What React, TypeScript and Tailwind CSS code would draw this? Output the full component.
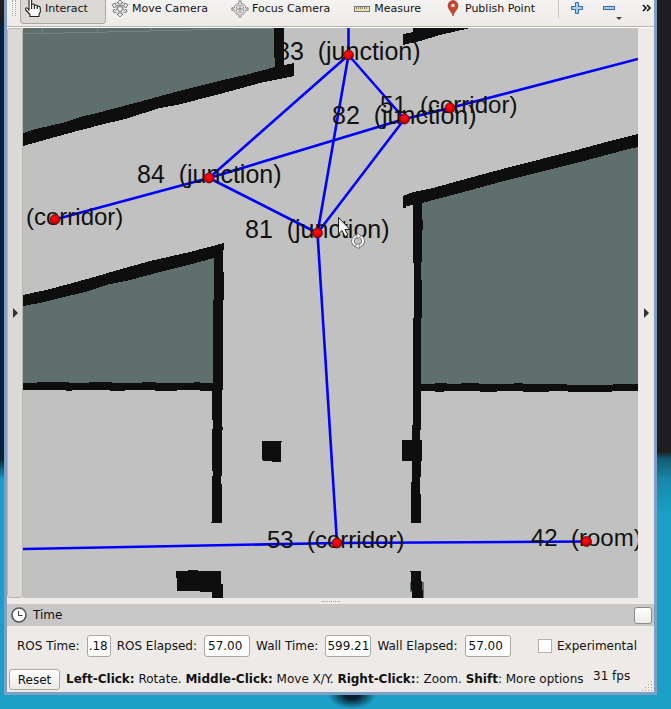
import type { ReactNode } from "react";

type Point = [number, number];

const nodes: Point[] = [
  [348.5, 55],
  [404.5, 119],
  [450, 108],
  [209, 178],
  [55, 219.5],
  [317.5, 233],
  [337, 543],
  [586.5, 541.5],
];

const edges: [Point, Point][] = [
  [[348.5, 28], nodes[0]],
  [nodes[0], nodes[3]],
  [nodes[0], nodes[5]],
  [nodes[0], nodes[1]],
  [nodes[1], nodes[3]],
  [nodes[1], nodes[5]],
  [nodes[1], nodes[2]],
  [nodes[2], [638, 59]],
  [nodes[3], nodes[4]],
  [nodes[3], nodes[5]],
  [nodes[5], nodes[6]],
  [[23, 549], nodes[6]],
  [nodes[6], nodes[7]],
];

const junctions: { x: number; y: number; text: string }[] = [
  { x: 276, y: 60, text: "83  (junction)" },
  { x: 332, y: 124, text: "82  (junction)" },
  { x: 137, y: 183, text: "84  (junction)" },
  { x: 245, y: 238, text: "81  (junction)" },
];

const places: { x: number; y: number; text: string }[] = [
  { x: 380, y: 113, text: "51  (corridor)" },
  { x: 26, y: 225, text: "(corridor)" },
  { x: 267, y: 548, text: "53  (corridor)" },
  { x: 531, y: 546, text: "42  (room)" },
];

function MapView() {
  return (
    <svg
      viewBox="23 28 615 570"
      preserveAspectRatio="xMidYMid slice"
      className="min-w-0 flex-1 bg-[#c1c1c1]"
      role="img"
      aria-label="Topological map"
    >
      <defs>
        <radialGradient id="node" cx="45%" cy="40%" r="60%">
          <stop offset="0" stopColor="#ff1010" />
          <stop offset="0.6" stopColor="#e60000" />
          <stop offset="1" stopColor="#8a0000" />
        </radialGradient>
      </defs>
      <g shapeRendering="crispEdges">
        <g fill="#5f6f6e">
          <path d="M23 28H276V70L23 138Z" />
          <path d="M421 200L638 142V386H420Z" />
          <path d="M23 300L216 252V385H23Z" />
          <path d="M410 582H414V592H410ZM418 582H424V598H418Z" />
        </g>
        <g stroke="#748483" strokeWidth="1" fill="none">
          <path d="M23 34L276 28M42 28V33M97 28V32M151 28V31M206 28V30" />
        </g>
        <g fill="#0e0e0e">
          <path d="M23 133L36 129L62 123L80 117L97 113L150 99L175 92L223 80L245 75L275 67V58H274V28H284V65L294 63V76L260 83L220 94L177 105L160 108L125 119L100 125L66 134L23 146Z" />
          <path d="M403 34L413 32V28H470L440 35L420 41L403 45Z" />
          <path d="M403 196L413 192L433 188L480 175L510 167L577 150L610 141L638 134V147L625 150L580 162L540 172L500 182L460 193L422 203V220H423V230H422V262H421V280H422V318H421V384H435V383H447V384H461V383H479V384H514V383H523V384H567V385H613V384H638V391H612V392H568V391H549V392H523V391H497V392H480V391H444V392H435V391H421V430H420V440H422V461H421V477H420V494H421V523H411V482H412V461H402V440H412V425H413V318H414V263H413V205L406 206V208H403Z" />
          <path d="M23 295L46 290L69 284L94 277L118 270L150 261L190 252L209 247L224 243V250H223V272H224V300H223V374H223V390H222V427H223V430H222V476H221V484H222V523H211V522H212V476H213V471H212V429H213V420H212V391H200V390H177V391H155V390H125V391H110V390H72V391H66V390H23V383H37V382H69V383H89V382H112V383H142V382H156V383H194V382H200V383H213V300H214V258L188 265L160 272L130 280L110 284L85 292L60 298L40 303L23 306Z" />
          <path d="M262 441H282V442H281V462H272V461H263V460H262Z" />
          <path d="M176 571H188V570H198V571H221V584H223V598H212V592H200V591H177V578H176Z" />
          <path d="M410 571H421V581H422V590H423V598H412V590H411V572H410Z" />
        </g>
      </g>
      <g stroke="#0000ff" strokeWidth="2.6">
        {edges.map(([a, b], i) => (
          <line key={i} x1={a[0]} y1={a[1]} x2={b[0]} y2={b[1]} />
        ))}
      </g>
      <g className="font-['Liberation_Sans',Arial,sans-serif]" fill="#111111">
        {junctions.map((l) => (
          <text key={l.text} x={l.x} y={l.y} className="text-[25px] whitespace-pre">
            {l.text}
          </text>
        ))}
        {places.map((l) => (
          <text key={l.text} x={l.x} y={l.y} className="text-[24px] whitespace-pre">
            {l.text}
          </text>
        ))}
      </g>
      {nodes.map(([x, y]) => (
        <circle key={`${x}-${y}`} cx={x} cy={y} r="5" fill="url(#node)" stroke="#5a0a0a" strokeWidth="0.7" />
      ))}
      <g strokeLinejoin="round">
        <path d="M338.5 217.500V234L342 230.500L345 236.500L348 235L345 229.500H350Z" fill="#f4f4f4" stroke="#222" strokeWidth="1" />
        <circle cx="358" cy="241" r="5" fill="none" stroke="#666" strokeWidth="3.6" />
        <circle cx="358" cy="241" r="5" fill="none" stroke="#fff" strokeWidth="2" />
        <path d="M357 233L361 236L357 239ZM359 243L355 246L359 249Z" fill="#fff" stroke="#666" strokeWidth="0.7" />
      </g>
    </svg>
  );
}

const iconBox = "size-4 shrink-0 overflow-visible";

function HandIcon() {
  return (
    <svg viewBox="0 0 16 16" className={iconBox} fill="#fff" stroke="#222" strokeWidth="1.1" strokeLinejoin="round">
      <path d="M4 10V-1Q4 -2.500 5.300 -2.500T6.600 -1V4Q6.800 3 8 3T9.400 4V5Q9.700 4 10.900 4T12.200 5V6Q12.700 5 13.900 5.200T15.300 7V11L14 13.500V15.500H5V13.500L0.800 9Q0 7 1.500 6.700Q2.700 6.700 4 9" />
      <path d="M6.600 4V8M9.400 5V8M12.200 6V8" fill="none" />
    </svg>
  );
}

function MoveIcon() {
  return (
    <svg viewBox="0 0 16 16" className={iconBox} fill="#f4f4f4" stroke="#707070" strokeWidth="0.9">
      <path d="M7 2V5H9V2H11L8 -1L5 2ZM7 13V10H9V13H11L8 16L5 13Z" />
      <path d="M0 3.500L4 2L3.500 4Q8 6.500 12.500 4L12 2L16 3.500L14 7L13 5.500Q8 8.500 3 5.500L2 7Z" />
      <path d="M1 11L2 8L3.500 9.500Q5 8 6 6M15 11L14 8L12.500 9.500Q11 8 10 6M1 11L4.500 11.500" fill="none" />
      <circle cx="8" cy="8" r="2.500" />
      <path d="M11.500 11.500L15 11" fill="none" />
    </svg>
  );
}

function FocusIcon() {
  return (
    <svg viewBox="0 0 16 16" className={iconBox} fill="none" stroke="#777">
      <circle cx="8" cy="8" r="5" strokeWidth="2.6" />
      <path d="M8 -0.500V5.500M8 10.500V16.500M-0.500 8H5.500M10.500 8H16.500" strokeWidth="2.8" />
      <circle cx="8" cy="8" r="5" stroke="#f2f2f2" strokeWidth="1.200" />
      <path d="M8 0.300V5M8 11V15.700M0.300 8H5M11 8H15.700" stroke="#f2f2f2" strokeWidth="1.200" />
      <path d="M8 6V10M6 8H10" strokeWidth="1" />
    </svg>
  );
}

function RulerIcon() {
  return (
    <svg viewBox="0 0 16 16" className={iconBox}>
      <rect x="0.500" y="5.500" width="15" height="5" fill="#eee2a8" stroke="#777" />
      <path d="M2.500 6V8M4.500 6V8M6.500 6V8M8.500 6V8M10.500 6V8M12.500 6V8" stroke="#8a8468" />
    </svg>
  );
}

function PinIcon() {
  return (
    <svg viewBox="0 0 16 16" className={iconBox}>
      <path d="M8 15C7 11 3 8 3 5A5 5.500 0 0 1 13 5C13 8 9 11 8 15Z" fill="#c8472c" stroke="#943420" strokeWidth="0.600" />
      <circle cx="8" cy="4.500" r="1.800" fill="#f8ece8" />
    </svg>
  );
}

function ToolButton({ icon, label, active }: { icon: ReactNode; label: string; active?: boolean }) {
  return (
    <button
      type="button"
      aria-pressed={!!active}
      className={`flex h-6 shrink-0 items-center gap-1 rounded-b-sm border border-t-0 pr-[17px] pb-1.5 pl-1 ${
        active ? "border-[#aaa7a2] bg-[#dbd9d5]" : "border-transparent"
      }`}
    >
      {icon}
      {label}
    </button>
  );
}

function Toolbar() {
  return (
    <header className="flex h-7 items-start overflow-hidden border-b border-white bg-linear-to-b from-[#f5f3f2] to-[#edeae7] pl-1 text-[11px] leading-4 shadow-[inset_0_-1px_0_#b9b4ae]">
      <div className="flex h-4 w-2 gap-0.5 pl-px">
        <span className="w-0 border-l border-dotted border-[#aaa]" />
        <span className="w-0 border-l border-dotted border-[#aaa]" />
      </div>
      <div className="flex gap-px pl-px">
        <ToolButton icon={<HandIcon />} label="Interact" active />
        <ToolButton icon={<MoveIcon />} label="Move Camera" />
        <ToolButton icon={<FocusIcon />} label="Focus Camera" />
        <ToolButton icon={<RulerIcon />} label="Measure" />
        <ToolButton icon={<PinIcon />} label="Publish Point" />
      </div>
      <div className="ml-auto flex items-start pr-px">
        <span className="mr-2.5 h-[18px] w-px bg-[#cbc8c4]" />
        <button type="button" aria-label="Add tool" className="mr-4 h-4 w-4">
          <svg viewBox="0 0 16 16" className="size-4">
            <path d="M6.500 2.500H9.500V6.500H13.500V9.500H9.500V13.500H6.500V9.500H2.500V6.500H6.500Z" fill="#a9cbe8" stroke="#3168a8" />
          </svg>
        </button>
        <button type="button" aria-label="Remove tool" className="mr-4 h-5 w-6">
          <svg viewBox="0 0 24 20" className="h-5 w-6">
            <rect x="2.500" y="6.500" width="11" height="3" fill="#a9cbe8" stroke="#3168a8" />
            <path d="M15 17H21L18 20Z" fill="#444" />
          </svg>
        </button>
        <button type="button" aria-label="More tools" className="h-4 w-3">
          <svg viewBox="0 0 12 16" className="h-4 w-3" fill="none" stroke="#111" strokeWidth="1.600">
            <path d="M2 5L5 8L2 11M6 5L9 8L6 11" />
          </svg>
        </button>
      </div>
    </header>
  );
}

function Field({ id, label, value, narrow }: { id: string; label: string; value: string; narrow?: boolean }) {
  return (
    <div className="flex items-center gap-[7px]">
      <label htmlFor={id}>{label}</label>
      <input
        id={id}
        readOnly
        value={value}
        className={`h-[22px] rounded-[3px] border border-[#aaa7a3] bg-white ${
          narrow ? "w-6 pl-px" : value.length > 5 ? "w-[46px] pl-px" : "w-[46px] pl-[3px]"
        }`}
      />
    </div>
  );
}

function TimePanel() {
  return (
    <section>
      <div className="flex h-[22px] items-center gap-1.5 bg-[#c7c7c7] pr-0.5 pl-1">
        <svg viewBox="0 0 16 16" className="size-4">
          <circle cx="8" cy="8" r="7" fill="#fff" stroke="#555" strokeWidth="1.600" />
          <path d="M7.500 4V8.500H11.500" fill="none" stroke="#333" />
        </svg>
        <h2>Time</h2>
        <button
          type="button"
          aria-label="Close time panel"
          className="ml-auto h-[17px] w-[18px] rounded-[3px] border border-[#8e8b87] bg-linear-to-b from-white to-[#eeebe8]"
        />
      </div>
      <div className="flex h-10 items-center gap-1.5 pr-[17px] pl-2.5 whitespace-nowrap">
        <Field id="ros-time" label="ROS Time:" value=".18" narrow />
        <Field id="ros-elapsed" label="ROS Elapsed:" value="57.00" />
        <Field id="wall-time" label="Wall Time:" value="599.21" />
        <Field id="wall-elapsed" label="Wall Elapsed:" value="57.00" />
        <label className="ml-auto flex items-center gap-[5px]">
          <input type="checkbox" className="size-3.5 appearance-none border border-[#b5b2ae] bg-white" />
          Experimental
        </label>
      </div>
    </section>
  );
}

function StatusBar() {
  return (
    <footer className="flex h-[26px] items-start gap-1.5 pl-0.5">
      <button
        type="button"
        className="mt-[3px] h-[21px] w-[51px] shrink-0 rounded-[3px] border border-[#aaa7a3] bg-linear-to-b from-white to-[#edeae7]"
      >
        Reset
      </button>
      <p className="mt-1 min-w-0 flex-1 overflow-hidden leading-[18px] whitespace-nowrap">
        <b>Left-Click:</b> Rotate. <b>Middle-Click:</b> Move X/Y. <b>Right-Click:</b>: Zoom. <b>Shift</b>: More options
      </p>
      <span className="w-11 shrink-0 pl-0.5 leading-5 whitespace-nowrap">31 fps</span>
      <svg viewBox="0 0 12 12" className="mr-px size-3 shrink-0 self-end" stroke="#aaa6a1" strokeDasharray="1 2">
        <path d="M1 10.500H11M4 7.500H11M7 4.500H11M10 1.500H11" />
      </svg>
    </footer>
  );
}

export default function App() {
  return (
    <div className="flex min-h-screen flex-col bg-[#1b9fc6] font-['DejaVu_Sans',Verdana,sans-serif] text-[12px] leading-4 text-[#111]">
      <div className="flex flex-1">
        <div className="w-1 shrink-0 bg-[linear-gradient(to_bottom,#1e1e1e_3%,#06213d_4%,#06213d_64%,#06202e_66%,#1b9fc6_69%)]" />
        <main className="flex min-w-0 flex-1 flex-col border-3 border-t-0 border-[#809fc5] bg-[#edeae7]">
          <Toolbar />
          <div className="flex flex-1">
            <button
              type="button"
              aria-label="Show left panel"
              className="flex w-4 shrink-0 items-center justify-center rounded-[3px] border border-[#b9b6b2] bg-[#dbd9d5]"
            >
              <svg viewBox="0 0 5 10" className="h-2.5 w-[5px]" fill="#333">
                <path d="M0 0L5 5L0 10Z" />
              </svg>
            </button>
            <MapView />
            <button type="button" aria-label="Hide right panel" className="flex w-4 shrink-0 items-center justify-center">
              <svg viewBox="0 0 5 10" className="h-2.5 w-[5px]" fill="#333">
                <path d="M0 0L5 5L0 10Z" />
              </svg>
            </button>
          </div>
          <div className="flex h-1.5 items-center justify-center">
            <span className="w-[18px] border-t border-dotted border-[#aaa6a1]" />
          </div>
          <TimePanel />
          <StatusBar />
        </main>
        <div className="w-3.5 shrink-0 bg-[linear-gradient(to_bottom,#1e1e1e_65%,#125a72_66%,#1889aa_69%,#1b9fc6_74%)]" />
      </div>
      <div className="flex h-3.5 justify-center pl-8">
        <span className="h-3.5 w-12 bg-[radial-gradient(ellipse_at_top,#06202e_20%,#1b9fc6_70%)]" />
      </div>
    </div>
  );
}
